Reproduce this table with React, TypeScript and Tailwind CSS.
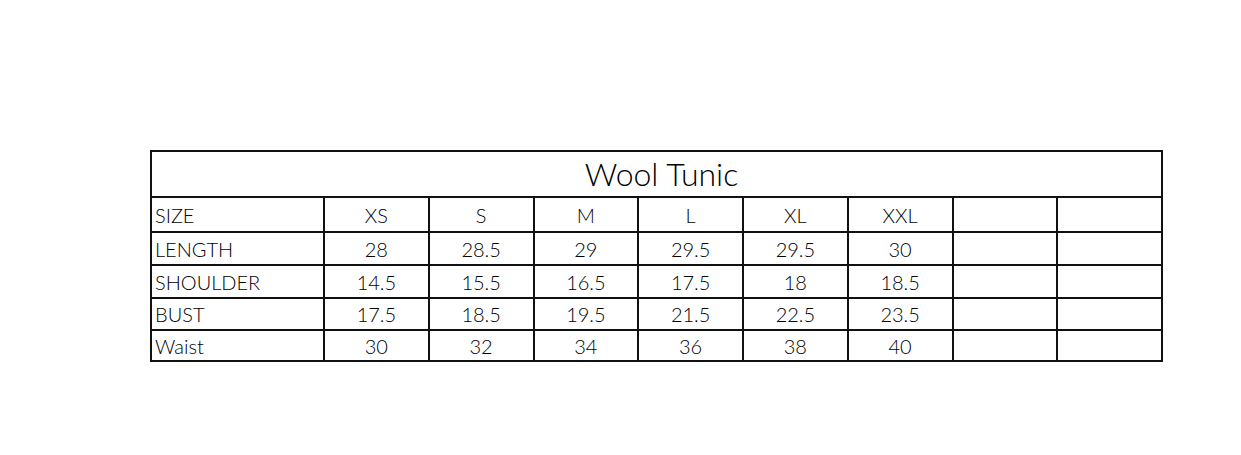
const rows: [string, string[]][] = [
  ["SIZE", ["XS", "S", "M", "L", "XL", "XXL", "", ""]],
  ["LENGTH", ["28", "28.5", "29", "29.5", "29.5", "30", "", ""]],
  ["SHOULDER", ["14.5", "15.5", "16.5", "17.5", "18", "18.5", "", ""]],
  ["BUST", ["17.5", "18.5", "19.5", "21.5", "22.5", "23.5", "", ""]],
  ["Waist", ["30", "32", "34", "36", "38", "40", "", ""]],
];

const heights = ["h-[35px]", "h-[33px]", "h-[33px]", "h-[32px]", "h-[31px]"];

export default function App() {
  return (
    <div className="w-[1241px] h-[455px] bg-white pt-[150px] pl-[150px] font-['Lato',sans-serif] font-light text-black">
      <table className="table-fixed border-collapse w-[1011px]">
        <colgroup>
          <col className="w-[173px]" />
          {Array.from({ length: 8 }).map((_, i) => (
            <col key={i} className="w-[104.75px]" />
          ))}
        </colgroup>
        <thead>
          <tr className="h-[46px]">
            <th colSpan={9} className="border-2 border-[#111] text-[32px] font-light text-center pl-[10px] leading-none">
              Wool Tunic
            </th>
          </tr>
        </thead>
        <tbody>
          {rows.map(([label, cells], r) => (
            <tr key={label} className={heights[r]}>
              <td className="border-2 border-[#111] text-[20px] leading-none text-left pl-[3px]">{label}</td>
              {cells.map((c, i) => (
                <td key={i} className="border-2 border-[#111] text-[20px] leading-none text-center">
                  {c}
                </td>
              ))}
            </tr>
          ))}
        </tbody>
      </table>
    </div>
  );
}
